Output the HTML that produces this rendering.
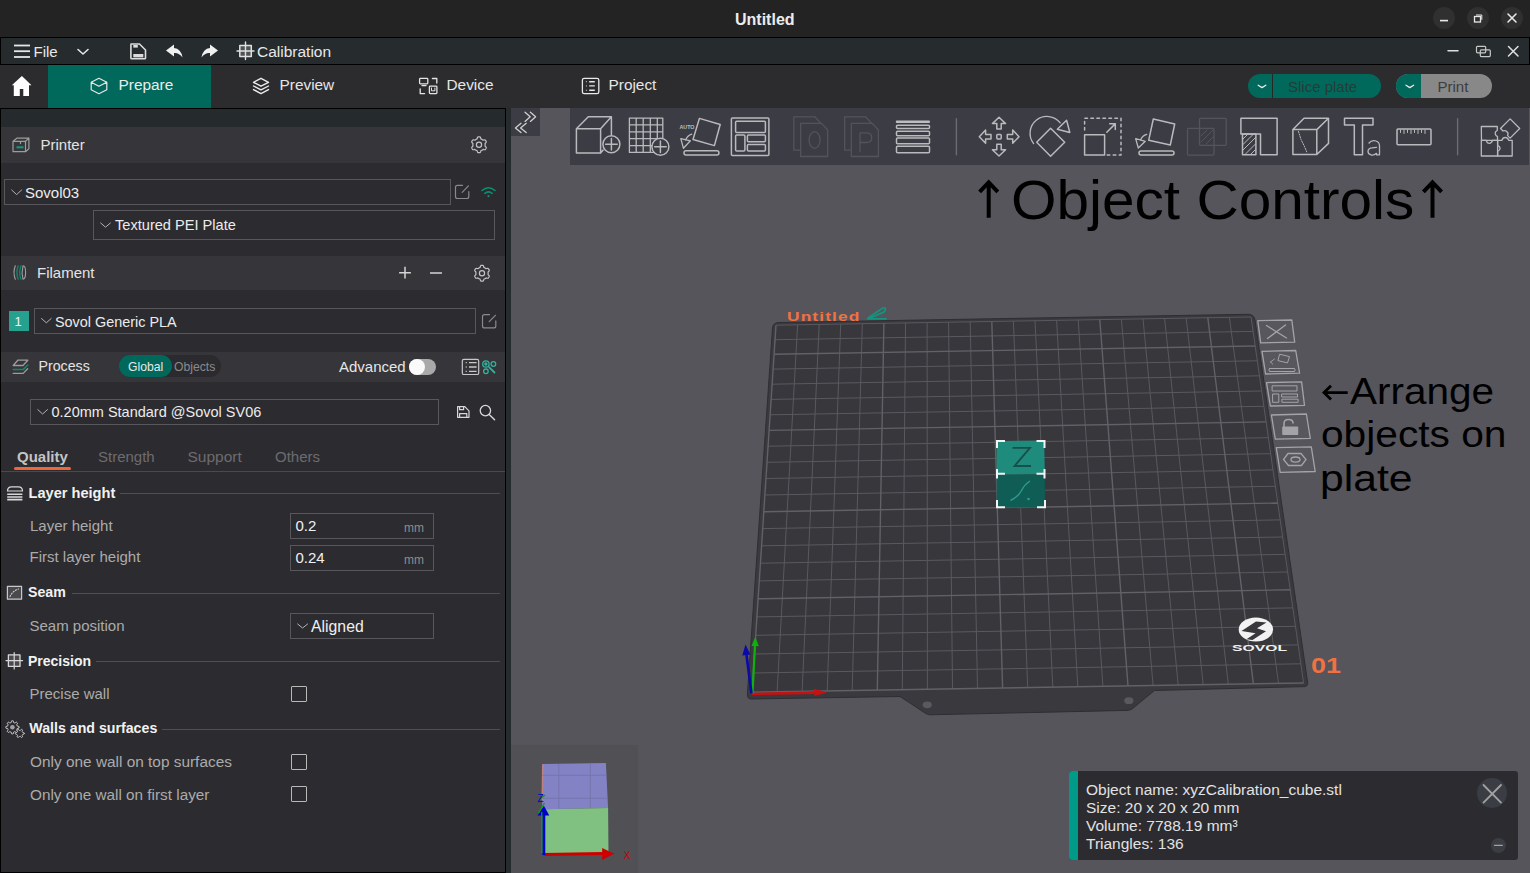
<!DOCTYPE html>
<html><head><meta charset="utf-8">
<style>
*{box-sizing:border-box;margin:0;padding:0}
html,body{width:1530px;height:873px;overflow:hidden;background:#56555b;font-family:"Liberation Sans",sans-serif}
.a{position:absolute}
.t{position:absolute;line-height:1;white-space:nowrap;font-size:15px}
svg{position:absolute;overflow:visible}
</style></head><body>
<!-- title bar -->
<div class="a" style="left:0;top:0;width:1530px;height:37px;background:#232323"></div>
<div class="t" style="left:735px;top:12px;font-size:16px;font-weight:700;color:#ececec">Untitled</div>
<div class="a" style="left:1433px;top:7px;width:22px;height:22px;border-radius:50%;background:#303030"></div>
<div class="a" style="left:1467px;top:7px;width:22px;height:22px;border-radius:50%;background:#303030"></div>
<div class="a" style="left:1501px;top:7px;width:22px;height:22px;border-radius:50%;background:#303030"></div>
<!-- menubar -->
<div class="a" style="left:0;top:37px;width:1530px;height:28px;background:#262b2e;border-top:1px solid #000;border-bottom:1px solid #000;border-left:1px solid #000;border-right:1px solid #000"></div>
<div class="t" style="left:33.5px;top:44px;color:#e8e8e8">File</div>
<div class="t" style="left:257px;top:44px;font-size:15.5px;color:#e8e8e8">Calibration</div>
<!-- tab bar -->
<div class="a" style="left:0;top:65px;width:1530px;height:43px;background:#2c2c2e"></div>
<div class="a" style="left:48px;top:65px;width:163px;height:43px;background:#00695b"></div>
<div class="t" style="left:118.5px;top:77.2px;font-size:15.4px;color:#ececec">Prepare</div>
<div class="t" style="left:279.5px;top:77.2px;font-size:15.4px;color:#e6e6e6">Preview</div>
<div class="t" style="left:446.5px;top:77.2px;font-size:15.4px;color:#e6e6e6">Device</div>
<div class="t" style="left:608.5px;top:77.2px;font-size:15.4px;color:#e6e6e6">Project</div>
<!-- slice / print -->
<div class="a" style="left:1248px;top:74px;width:133px;height:24px;border-radius:12px;background:#00695b"></div>
<div class="a" style="left:1271.5px;top:74px;width:1.5px;height:24px;background:#262828"></div>
<div class="t" style="left:1288px;top:78.5px;color:#263c3a">Slice plate</div>
<div class="a" style="left:1396px;top:74px;width:96px;height:24px;border-radius:12px;background:#888889;overflow:hidden"><div class="a" style="left:0;top:0;width:25px;height:24px;background:#00695b"></div></div>
<div class="t" style="left:1437.5px;top:78.5px;color:#3c3c40">Print</div>
<!-- left panel frame -->
<div class="a" style="left:0;top:108px;width:511px;height:765px;background:#262c2d"></div>
<div class="a" style="left:0;top:108px;width:506px;height:765px;background:#000"></div>
<div class="a" style="left:1px;top:109px;width:504px;height:763px;background:#2c2b30"></div>
<div class="a" style="left:1px;top:109px;width:504px;height:18px;background:#252b2d"></div>
<!-- Printer header -->
<div class="a" style="left:1px;top:127px;width:504px;height:36px;background:#36353a"></div>
<div class="t" style="left:40.5px;top:137px;color:#e4e4e4">Printer</div>
<div class="a" style="left:4px;top:179px;width:447px;height:26px;border:1px solid #58575c"></div>
<div class="t" style="left:25px;top:184.6px;color:#ececec">Sovol03</div>
<div class="a" style="left:93px;top:210px;width:402px;height:30px;border:1px solid #58575c"></div>
<div class="t" style="left:115px;top:218.4px;font-size:14.6px;color:#ececec">Textured PEI Plate</div>
<!-- Filament header -->
<div class="a" style="left:1px;top:256px;width:504px;height:34px;background:#36353a"></div>
<div class="t" style="left:37px;top:265.3px;color:#e4e4e4">Filament</div>
<div class="a" style="left:9px;top:311px;width:20px;height:20px;background:#26a08f"></div>
<div class="t" style="left:14.5px;top:314.5px;font-size:13px;color:#f4f4f4">1</div>
<div class="a" style="left:34px;top:308px;width:442px;height:26px;border:1px solid #58575c"></div>
<div class="t" style="left:55px;top:314.5px;font-size:14.4px;color:#ececec">Sovol Generic PLA</div>
<!-- Process header -->
<div class="a" style="left:1px;top:352px;width:504px;height:30px;background:#36353a"></div>
<div class="t" style="left:38.5px;top:359.3px;font-size:14.2px;color:#e4e4e4">Process</div>
<div class="a" style="left:119px;top:355px;width:102px;height:22px;border-radius:11px;background:#2b2a2f"></div>
<div class="a" style="left:119px;top:355px;width:53px;height:22px;border-radius:11px;background:#00695b"></div>
<div class="t" style="left:128px;top:360.5px;font-size:12.2px;color:#e8e8e8">Global</div>
<div class="t" style="left:174px;top:360.5px;font-size:12.2px;color:#8a8a8c">Objects</div>
<div class="t" style="left:339px;top:359.3px;color:#e6e6e6">Advanced</div>
<div class="a" style="left:409px;top:359px;width:27px;height:16px;border-radius:8px;background:#a9a9aa"></div>
<div class="a" style="left:409px;top:359px;width:16px;height:16px;border-radius:50%;background:#fafafa"></div>
<!-- process combo -->
<div class="a" style="left:30px;top:399px;width:409px;height:26px;border:1px solid #58575c"></div>
<div class="t" style="left:51.5px;top:404.7px;font-size:14.5px;color:#ececec">0.20mm Standard @Sovol SV06</div>
<!-- tabs -->
<div class="t" style="left:17px;top:448.5px;font-weight:700;color:#c4c4c4">Quality</div>
<div class="t" style="left:98px;top:448.5px;color:#6c6c6f">Strength</div>
<div class="t" style="left:187.5px;top:448.5px;font-size:15.5px;color:#6c6c6f">Support</div>
<div class="t" style="left:275px;top:448.5px;color:#6c6c6f">Others</div>
<div class="a" style="left:14px;top:467px;width:57px;height:3px;border-radius:1.5px;background:#f0663a"></div>
<div class="a" style="left:1px;top:471px;width:504px;height:1px;background:#4a494e"></div>
<!-- options -->
<div class="t" style="left:28.5px;top:485.5px;font-size:14.6px;font-weight:700;color:#f2f2f2">Layer height</div>
<div class="a" style="left:120px;top:493px;width:380px;height:1px;background:#4f4e53"></div>
<div class="t" style="left:30px;top:518.3px;color:#ababab">Layer height</div>
<div class="a" style="left:290px;top:513px;width:144px;height:26px;border:1px solid #58575c"></div>
<div class="t" style="left:295.5px;top:518.3px;color:#f0f0f0">0.2</div>
<div class="t" style="left:404px;top:521.8px;font-size:12px;color:#8c8c8c">mm</div>
<div class="t" style="left:29.5px;top:549.3px;color:#ababab">First layer height</div>
<div class="a" style="left:290px;top:545px;width:144px;height:26px;border:1px solid #58575c"></div>
<div class="t" style="left:295.5px;top:550.3px;color:#f0f0f0">0.24</div>
<div class="t" style="left:404px;top:553.8px;font-size:12px;color:#8c8c8c">mm</div>
<div class="t" style="left:28px;top:584.6px;font-size:14.2px;font-weight:700;color:#f2f2f2">Seam</div>
<div class="a" style="left:72px;top:593px;width:428px;height:1px;background:#4f4e53"></div>
<div class="t" style="left:29.5px;top:618px;color:#ababab">Seam position</div>
<div class="a" style="left:290px;top:613px;width:144px;height:26px;border:1px solid #58575c"></div>
<div class="t" style="left:311px;top:619px;font-size:15.8px;color:#f0f0f0">Aligned</div>
<div class="t" style="left:28px;top:654px;font-size:14px;font-weight:700;color:#f2f2f2">Precision</div>
<div class="a" style="left:96px;top:661px;width:404px;height:1px;background:#4f4e53"></div>
<div class="t" style="left:29.5px;top:686px;color:#ababab">Precise wall</div>
<div class="a" style="left:291px;top:686px;width:16px;height:16px;border:1px solid #b8b8b8;border-radius:1px"></div>
<div class="t" style="left:29.3px;top:721.3px;font-size:14.2px;font-weight:700;color:#f2f2f2">Walls and surfaces</div>
<div class="a" style="left:162px;top:729px;width:338px;height:1px;background:#4f4e53"></div>
<div class="t" style="left:30px;top:753.6px;font-size:15.4px;color:#ababab">Only one wall on top surfaces</div>
<div class="a" style="left:291px;top:754px;width:16px;height:16px;border:1px solid #b8b8b8;border-radius:1px"></div>
<div class="t" style="left:30px;top:786.6px;font-size:15.3px;color:#ababab">Only one wall on first layer</div>
<div class="a" style="left:291px;top:786px;width:16px;height:16px;border:1px solid #b8b8b8;border-radius:1px"></div>
<!-- viewport -->
<div class="a" style="left:511px;top:108px;width:1019px;height:765px;background:#56555b"></div>
<div class="a" style="left:511px;top:108px;width:29px;height:28px;background:#3b3c44"></div>
<div class="a" style="left:570px;top:108px;width:959px;height:57px;background:#3b3c44"></div>
<svg width="1530" height="873" style="left:0;top:0" viewBox="0 0 1530 873">
<path d="M779,322.5 L1248,314.3 Q1254,314.3 1255,320 L1307.7,683 Q1308,686.5 1304,686.6 L1154.5,690.5 L1132,709 Q1130,710.3 1127,710.4 L930,714.8 Q927.6,714.8 925,713 L900,696.5 L751,699 Q747.2,699 747.4,694 L772.5,328 Q773,322.5 779,322.5 Z" fill="#3a393e" stroke="#2f2e33" stroke-width="1"/>
<path d="M776,325.2 L1251,317 L1303.6,683 L752,692.2 Z" fill="#38373c"/>
<ellipse cx="927.2" cy="704.8" rx="4.6" ry="3.4" fill="#5a595f"/>
<ellipse cx="1128.9" cy="700.7" rx="4.6" ry="3.4" fill="#5a595f"/>
<g stroke="#5a5960" stroke-width="1" fill="none"><line x1="797.6" y1="324.8" x2="777.1" y2="691.8"/><line x1="753.3" y1="673.0" x2="1300.8" y2="663.8"/><line x1="819.2" y1="324.5" x2="802.1" y2="691.4"/><line x1="754.5" y1="654.0" x2="1298.1" y2="644.9"/><line x1="840.7" y1="324.1" x2="827.2" y2="690.9"/><line x1="755.7" y1="635.3" x2="1295.4" y2="626.3"/><line x1="862.3" y1="323.7" x2="852.2" y2="690.5"/><line x1="756.9" y1="616.9" x2="1292.8" y2="607.9"/><line x1="905.5" y1="323.0" x2="902.3" y2="689.7"/><line x1="759.3" y1="580.9" x2="1287.6" y2="572.0"/><line x1="927.1" y1="322.6" x2="927.4" y2="689.3"/><line x1="760.4" y1="563.2" x2="1285.1" y2="554.4"/><line x1="948.6" y1="322.2" x2="952.5" y2="688.9"/><line x1="761.6" y1="545.8" x2="1282.6" y2="537.0"/><line x1="970.2" y1="321.8" x2="977.5" y2="688.4"/><line x1="762.7" y1="528.6" x2="1280.2" y2="519.9"/><line x1="1013.4" y1="321.1" x2="1027.7" y2="687.6"/><line x1="764.9" y1="495.0" x2="1275.3" y2="486.3"/><line x1="1035.0" y1="320.7" x2="1052.8" y2="687.2"/><line x1="766.0" y1="478.5" x2="1273.0" y2="469.9"/><line x1="1056.6" y1="320.4" x2="1077.8" y2="686.8"/><line x1="767.0" y1="462.3" x2="1270.6" y2="453.7"/><line x1="1078.2" y1="320.0" x2="1102.9" y2="686.3"/><line x1="768.1" y1="446.2" x2="1268.3" y2="437.7"/><line x1="1121.4" y1="319.2" x2="1153.1" y2="685.5"/><line x1="770.1" y1="414.8" x2="1263.8" y2="406.3"/><line x1="1143.0" y1="318.9" x2="1178.2" y2="685.1"/><line x1="771.1" y1="399.4" x2="1261.6" y2="391.0"/><line x1="1164.6" y1="318.5" x2="1203.2" y2="684.7"/><line x1="772.1" y1="384.2" x2="1259.4" y2="375.8"/><line x1="1186.2" y1="318.1" x2="1228.3" y2="684.3"/><line x1="773.1" y1="369.1" x2="1257.3" y2="360.8"/><line x1="1229.4" y1="317.4" x2="1278.5" y2="683.4"/><line x1="775.1" y1="339.7" x2="1253.1" y2="331.4"/><line x1="1251.0" y1="317.0" x2="1303.6" y2="683.0"/><line x1="776.0" y1="325.2" x2="1251.0" y2="317.0"/></g><g stroke="#626168" stroke-width="1.4" fill="none"><line x1="776.0" y1="325.2" x2="752.0" y2="692.2"/><line x1="752.0" y1="692.2" x2="1303.6" y2="683.0"/><line x1="883.9" y1="323.3" x2="877.3" y2="690.1"/><line x1="758.1" y1="598.8" x2="1290.2" y2="589.8"/><line x1="991.8" y1="321.5" x2="1002.6" y2="688.0"/><line x1="763.8" y1="511.7" x2="1277.7" y2="503.0"/><line x1="1099.8" y1="319.6" x2="1128.0" y2="685.9"/><line x1="769.1" y1="430.4" x2="1266.1" y2="421.9"/><line x1="1207.8" y1="317.7" x2="1253.4" y2="683.8"/><line x1="774.1" y1="354.3" x2="1255.2" y2="346.0"/></g>
<!-- plate label -->
<text transform="translate(787,320.6) scale(1.45,1)" font-family="Liberation Sans" font-weight="700" font-size="12" fill="#f07242" letter-spacing="0.75">Untitled</text>
<path d="M867.5,318.8 h18.5 M868.5,317.8 l12.5,-8.6 q3.4,-2.2 4.3,-0.6 q0.8,1.6 -2.2,3.8 l-12.8,5.6" stroke="#14937f" stroke-width="1.8" fill="none" stroke-linecap="round"/>
<!-- sovol logo -->
<ellipse cx="1255.9" cy="629.5" rx="17.2" ry="12" fill="#f2f2f2"/>
<path d="M1241.5,631 L1256,621.5 L1266.5,622.5 L1257,628.3 L1266,631.2 L1252.5,640 L1246.5,639.3 L1255.5,633.2 Z" fill="#38373c"/>
<text x="1232" y="651.3" font-family="Liberation Sans" font-weight="700" font-size="9.6" fill="#f0f0f0" textLength="55" lengthAdjust="spacingAndGlyphs">SOVOL</text>
<text x="1311" y="672.6" font-family="Liberation Sans" font-weight="700" font-size="22" fill="#f07242" textLength="30" lengthAdjust="spacingAndGlyphs">01</text>
<!-- plate side icons -->
<g stroke="#a4a4a8" stroke-width="1.3" fill="#58575d" stroke-linejoin="round"><path d="M1257.8,320.7 L1291.8,320 L1294.7,342.1 L1260.7,342.8 Z"/><path d="M1262,351.4 L1295.7,350.5 L1299.6,373.2 L1265.6,374 Z"/><path d="M1266.5,382.6 L1301.6,381.8 L1304.5,405.3 L1270.4,406 Z"/><path d="M1271.4,415 L1306.4,414 L1310.3,438.4 L1275.3,439.2 Z"/><path d="M1276.3,447.7 L1311.3,446.8 L1315.2,471.5 L1280.2,472.4 Z"/></g>
<g stroke="#a4a4a8" stroke-width="1.3" fill="none" stroke-linecap="round" stroke-linejoin="round">
<path d="M1266.5,325.5 l20,12.5 M1285.5,325 l-18,13.5"/>
<path d="M1280,354.3 l9.5,2.3 l-2,6.3 l-9.2,-2.2 z" stroke-width="1"/>
<path d="M1269.5,368.5 h25 q1.3,1.5 0,3 h-25 q-1.3,-1.5 0,-3" stroke-width="1"/>
<path d="M1270.5,362 l4,-3 M1270.5,362 l2.3,2.2" stroke-width="0.9"/>
<path d="M1272.5,385.8 h24.5 v5.2 h-24.5 z M1273,394 h5.8 v8.3 h-5.8 z M1282,394 h15.5 v3 h-15.5 z M1282.3,399.2 h15.8 v3.1 h-15.8 z" stroke-width="1"/>
<path d="M1284,427 v-3.5 q0,-4 4.5,-4 q4.5,0 4.5,3.5" stroke-width="1.6"/>
</g>
<rect x="1282.2" y="426.5" width="16" height="8.5" rx="0.8" fill="#a4a4a8"/>
<g stroke="#a4a4a8" stroke-width="1.3" fill="none">
<path d="M1288,453.5 h13 l5,6 l-4.5,6 h-13 l-5,-6 z"/>
<ellipse cx="1295.5" cy="459.6" rx="4.5" ry="2.6"/>
</g>
<!-- object -->
<path d="M996.6,440.9 L1044.2,440.6 L1044.8,474.3 L996.6,474.5 Z" fill="#1f8b7d"/>
<path d="M996.6,474.5 L1044.8,474.3 L1045,507.4 L996.8,507.6 Z" fill="#0f5d54"/>
<path d="M1012.5,447.8 h17.5 l-15.5,18.2 h16.5" stroke="#17504a" stroke-width="1.8" fill="none"/>
<path d="M1010.5,500.5 q8,-4 11,-10 q3,-6 8.5,-9.5" stroke="#2a9b8c" stroke-width="1.4" fill="none"/>
<circle cx="1028.5" cy="499" r="1.3" fill="#2a9b8c"/>
<g stroke="#f4f4f4" stroke-width="2" fill="none" stroke-linecap="butt">
<path d="M997,448 v-7 h8 M1036.5,441 h8 v7 M997,469 v9.5 M997,473.8 h8 M1044.5,469 v9.5 M1044.5,473.8 h-8 M997,500 v7.3 h8 M1045,500 v7.3 h-8"/>
</g>
<!-- axes -->
<path d="M752,694 L816,692.6" stroke="#c81010" stroke-width="2.6"/>
<path d="M814,688.8 L827,692.4 L814.5,696 Z" fill="#c81010"/>
<path d="M752.5,693.5 L755,645" stroke="#10b010" stroke-width="2.2"/>
<path d="M751.5,646 L755.3,636.8 L758.8,646.2 Z" fill="#10b010"/>
<path d="M751.5,693.5 L746.5,655" stroke="#0a0aa8" stroke-width="2.6"/>
<path d="M742.3,655.5 L745.5,644.5 L750.4,654.5 Z" fill="#0a0aa8"/>
</svg>
<!-- annotations -->
<div class="t" style="left:1010.5px;top:172.5px;font-size:55px;color:#000;transform:scaleX(1.064);transform-origin:0 0">Object Controls</div>
<svg width="1530" height="873" style="left:0;top:0" viewBox="0 0 1530 873" fill="none" stroke="#000" stroke-width="4" stroke-linecap="butt">
<path d="M988.7,181.5 V217.7 M979.6,191.8 L988.7,182.3 L997.8,191.8"/>
<path d="M1432.5,181.5 V217.7 M1423.4,191.8 L1432.5,182.3 L1441.6,191.8"/>
<path d="M1323.5,392.6 H1347.7 M1331,385.8 L1324,392.6 L1331,399.4" stroke-width="2.8"/>
</svg>
<div class="t" style="left:1350px;top:373.5px;font-size:36px;color:#000;transform:scaleX(1.124);transform-origin:0 0">Arrange</div>
<div class="t" style="left:1320.5px;top:417px;font-size:36px;color:#000;transform:scaleX(1.13);transform-origin:0 0">objects on</div>
<div class="t" style="left:1320px;top:460.5px;font-size:36px;color:#000;transform:scaleX(1.186);transform-origin:0 0">plate</div>
<!-- minimap -->
<div class="a" style="left:511px;top:745px;width:127px;height:128px;background:#505055"></div>
<svg width="1530" height="873" style="left:0;top:0" viewBox="0 0 1530 873">
<path d="M542.2,764 L605.9,763 L608.1,808 L542.2,809.3 Z" fill="#8282c4"/>
<path d="M542.2,809.3 L608.1,808 L608.5,853.6 L542.5,853.8 Z" fill="#80c080"/>
<path d="M542,764.5 L541.5,800 L543,800 L543.5,764.5 Z" fill="#c08080"/>
<g stroke="#7373a8" stroke-width="0.8" fill="none">
<path d="M558.8,764 V808.6 M590.4,763.5 V808.2 M542.2,775.3 H606.4 M542.2,798.3 H607.6"/>
</g>
<path d="M543.6,854.5 L603,853.5" stroke="#cc0000" stroke-width="3.2"/>
<path d="M602.2,848 L614.1,853.8 L602.2,860 Z" fill="#cc0000"/>
<path d="M543.8,855 V814" stroke="#0000cc" stroke-width="3"/>
<path d="M537.5,815.6 L543.9,805.8 L549.3,815.6 Z" fill="#0000cc"/>
<path d="M541.8,853 V812" stroke="#00aa00" stroke-width="1.2"/>
<path d="M538.5,813 L544.5,803 M539,800 L545,795" stroke="#00aa00" stroke-width="1.3"/>
<text x="537.6" y="801.6" font-family="Liberation Sans" font-size="10" fill="#0000cc">Z</text>
<text x="623.5" y="859.3" font-family="Liberation Sans" font-size="10.5" fill="#cc0000">X</text>
</svg>
<!-- info box -->
<div class="a" style="left:1069px;top:771px;width:449px;height:89px;border-radius:3px;background:#2c2b30;overflow:hidden"><div class="a" style="left:0;top:0;width:9px;height:89px;background:#009a88"></div></div>
<div class="t" style="left:1086px;top:781.3px;font-size:15.5px;line-height:17.8px;color:#e2e2e2;white-space:pre">Object name: xyzCalibration_cube.stl
Size: 20 x 20 x 20 mm
Volume: 7788.19 mm³
Triangles: 136</div>
<div class="a" style="left:1477px;top:778px;width:30px;height:30px;border-radius:50%;background:#3a3d44"></div>
<div class="a" style="left:1491px;top:838px;width:15px;height:15px;border-radius:50%;background:#3a3d44"></div>
<svg width="1530" height="873" style="left:0;top:0" viewBox="0 0 1530 873" fill="none" stroke="#a2a2a4" stroke-width="1.8" stroke-linecap="round">
<path d="M1483.5,785 L1501,802.6 M1501,785 L1483.5,802.6"/>
<path d="M1494.5,845.4 H1502.3" stroke-width="1.2"/>
</svg>
<svg width="1530" height="873" style="left:0;top:0" viewBox="0 0 1530 873" fill="none" stroke-linecap="round" stroke-linejoin="round">
<!-- window buttons -->
<g stroke="#e8e8e8" stroke-width="1.6">
<line x1="1440" y1="20.6" x2="1448" y2="20.6" stroke-linecap="butt"/>
<rect x="1474.5" y="16.5" width="6" height="5.5" stroke-width="1.3" stroke-linejoin="miter"/>
<path d="M1476,15 h5.8 v4.8" stroke-width="1" stroke-linecap="butt" stroke-linejoin="miter"/>
<path d="M1508,14 l8,8 M1516,14 l-8,8"/>
</g>
<!-- menubar -->
<g stroke="#e6e6e6" stroke-width="1.8" stroke-linecap="butt">
<line x1="14" y1="45.5" x2="30" y2="45.5"/><line x1="14" y1="51.2" x2="30" y2="51.2"/><line x1="14" y1="57" x2="30" y2="57"/>
</g>
<polyline points="78,49.5 83,54 88,49.5" stroke="#e6e6e6" stroke-width="1.6"/>
<g stroke="#dcdcdc" stroke-width="1.6">
<path d="M131,44 h8.5 l6,6 v8 q0,0.8 -0.8,0.8 h-13 q-0.8,0 -0.8,-0.8 v-13.2 q0,-0.8 0.8,-0.8z"/>
</g>
<rect x="133.3" y="45" width="4.5" height="2.6" fill="#dcdcdc"/>
<rect x="133.3" y="54" width="10" height="3.4" fill="#dcdcdc"/>
<path d="M166,50.6 L174,44.6 L174,48 Q181,48.5 182.5,57.5 Q179,52.5 174,53 L174,56.6 Z" fill="#f0f0f0"/>
<path d="M218,50.6 L210,44.6 L210,48 Q203,48.5 201.5,57.5 Q205,52.5 210,53 L210,56.6 Z" fill="#f0f0f0"/>
<rect x="239.8" y="45.6" width="11.5" height="11" fill="#505354" stroke="#e0e0e0" stroke-width="1.5"/>
<path d="M245.5,42 v17.6 M237,51 h17" stroke="#e0e0e0" stroke-width="1.4"/>
<!-- menubar right -->
<g stroke="#e0e0e0" stroke-width="1.5">
<line x1="1448" y1="50.7" x2="1458" y2="50.7"/>
<rect x="1476.5" y="46.3" width="9.2" height="6.5" rx="1" stroke="#c8c8c8" stroke-width="1.2"/>
<rect x="1480.3" y="49.8" width="10" height="6.8" rx="1" stroke="#c8c8c8" stroke-width="1.2"/>
<path d="M1508.5,46.5 l9.5,9.5 M1518,46.5 l-9.5,9.5"/>
</g>
<!-- tab icons -->
<path d="M21.9,76 L31.5,85.3 L29,85.3 L29,96 L23.3,96 L23.3,89 L19.8,89 L19.8,96 L13.8,96 L13.8,85.3 L11.8,85.3 Z" fill="#ffffff"/>
<g stroke="#e8e8e8" stroke-width="1.2">
<path d="M98.9,78.3 L106.8,82.2 L106.8,89.8 L98.9,93.7 L91.2,89.8 L91.2,82.2 Z M91.2,82.2 L98.9,86.3 L106.8,82.2"/>
</g>
<g stroke="#ececec" stroke-width="1.4">
<path d="M261,78.3 L268.5,82.3 L261,86.2 L253.5,82.3 Z"/>
<path d="M253.5,86 L261,89.9 L268.5,86"/>
<path d="M253.5,89.6 L261,93.6 L268.5,89.6"/>
</g>
<g stroke="#e4e4e4" stroke-width="1.3">
<rect x="419.6" y="78.4" width="8.2" height="5.4" rx="0.8"/>
<path d="M422,85.6 h4"/>
<path d="M432.4,78.5 h4.4 v4.5"/>
<path d="M420.2,88.8 v4.8 h4.4"/>
<rect x="429.4" y="86.2" width="7.5" height="7.4" rx="0.8"/>
<path d="M431.5,88 v2.8 h3.4 v-2.8" stroke-width="1"/>
</g>
<g stroke="#e8e8e8">
<rect x="582.4" y="78.3" width="16.4" height="15.4" rx="1.8" stroke-width="1.3"/>
<path d="M589.2,81.7 h5.6 M589.2,85.9 h5.6 M589.2,90.2 h5.6" stroke-width="1.4" stroke-linecap="butt"/>
<path d="M586.4,81.7 v0.1 M586.4,85.9 v0.1 M586.4,90.2 v0.1" stroke-width="1"/>
</g>
<!-- slice/print chevrons -->
<polyline points="1258.2,85.2 1262,87.6 1265.8,85.2" stroke="#e8e8e8" stroke-width="1.3"/>
<polyline points="1406,85.2 1409.8,87.6 1413.6,85.2" stroke="#e8e8e8" stroke-width="1.3"/>
<!-- panel icons -->
<g stroke="#9c9c9c" stroke-width="1.2">
<path d="M13,141.3 h12.5 v10.4 h-12.5 z M13,141.3 l4.2,-3.2 h11.7 v10.6 l-3.4,3 M25.5,141.3 l3.4,-3.2 M20.5,141.6 v2"/>
</g>
<path d="M16.5,147.3 h7" stroke="#139a80" stroke-width="2" stroke-linecap="butt"/>
<g stroke="#a0a0a0" stroke-width="1.1">
<path d="M15.3,265.8 q-2.6,6.7 0,13.4 M23,265.8 q2.6,0 2.6,6.7 q0,6.7 -2.6,6.7 q-1.8,-6.7 0,-13.4"/>
</g>
<g stroke="#0d8a6e" stroke-width="1.3">
<path d="M18.2,265.8 q-2.6,6.7 0,13.4 M21,265.8 q-2.6,6.7 0,13.4"/>
</g>
<g stroke="#9c9c9c" stroke-width="1.3">
<path d="M13.2,365.5 l4.6,-5.3 h10 l-4.8,5.3 z"/>
<path d="M13.2,373.4 h10 l4.4,-4.6"/>
</g>
<path d="M13.2,369.4 h10.2 l4.4,-4.4" stroke="#0d8a6e" stroke-width="1.5"/>
<!-- gear icons -->
<g id="gear" stroke="#c4c4c4" stroke-width="1.2"><path d="M485.14,144.80 L485.13,145.20 L485.09,145.60 L485.02,146.00 L485.57,146.56 L486.08,147.20 L486.30,147.82 L486.09,148.29 L485.84,148.75 L485.57,149.19 L485.27,149.61 L484.62,149.73 L483.81,149.61 L483.05,149.42 L482.74,149.67 L482.41,149.91 L482.07,150.12 L481.72,150.31 L481.35,150.47 L480.97,150.61 L480.76,151.37 L480.46,152.13 L480.03,152.63 L479.52,152.68 L479.00,152.70 L478.48,152.68 L477.97,152.63 L477.54,152.13 L477.24,151.37 L477.03,150.61 L476.65,150.47 L476.28,150.31 L475.93,150.12 L475.59,149.91 L475.26,149.67 L474.95,149.42 L474.19,149.61 L473.38,149.73 L472.73,149.61 L472.43,149.19 L472.16,148.75 L471.91,148.29 L471.70,147.82 L471.92,147.20 L472.43,146.56 L472.98,146.00 L472.91,145.60 L472.87,145.20 L472.86,144.80 L472.87,144.40 L472.91,144.00 L472.98,143.60 L472.43,143.04 L471.92,142.40 L471.70,141.78 L471.91,141.31 L472.16,140.85 L472.43,140.41 L472.73,139.99 L473.38,139.87 L474.19,139.99 L474.95,140.18 L475.26,139.93 L475.59,139.69 L475.93,139.48 L476.28,139.29 L476.65,139.13 L477.03,138.99 L477.24,138.23 L477.54,137.47 L477.97,136.97 L478.48,136.92 L479.00,136.90 L479.52,136.92 L480.03,136.97 L480.46,137.47 L480.76,138.23 L480.97,138.99 L481.35,139.13 L481.72,139.29 L482.07,139.48 L482.41,139.69 L482.74,139.93 L483.05,140.18 L483.81,139.99 L484.62,139.87 L485.27,139.99 L485.57,140.41 L485.84,140.85 L486.09,141.31 L486.30,141.78 L486.08,142.40 L485.57,143.04 L485.02,143.60 L485.09,144.00 L485.13,144.40 Z"/><circle cx="479" cy="144.8" r="2.6"/></g>
<use href="#gear" x="3" y="128.5"/>
<!-- edit icons -->
<g stroke="#8a8a8c" stroke-width="1.2">
<path d="M462.5,185.3 h-5 q-2,0 -2,2 v9.2 q0,2 2,2 h9.3 q2,0 2,-2 v-5"/>
<path d="M462.2,192.3 l6.2,-6.4"/>
<path d="M489.5,314.7 h-5 q-2,0 -2,2 v9.2 q0,2 2,2 h9.3 q2,0 2,-2 v-5"/>
<path d="M489.2,321.7 l6.2,-6.4"/>
</g>
<!-- wifi -->
<g stroke="#0a8f72" stroke-width="1.6">
<path d="M482,190.5 q6.5,-5.5 13,0"/>
<path d="M484.8,193.3 q3.7,-3 7.4,0"/>
</g>
<circle cx="488.5" cy="196.2" r="1.1" fill="#0a8f72"/>
<!-- plus minus -->
<path d="M405,266.8 v11.8 M399.1,272.7 h11.8 M430,273 h12" stroke="#d4d4d4" stroke-width="1.5" stroke-linecap="butt"/>
<!-- list & link -->
<g stroke="#c8c8c8">
<rect x="462.3" y="359.3" width="16.4" height="15.2" rx="1.6" stroke-width="1.2"/>
<path d="M469,362.7 h7.6 M469,367 h7.6 M469,371.3 h7.6" stroke-width="1.3" stroke-linecap="butt"/>
<path d="M466,362.7 h0.6 M466,367 h0.6 M466,371.3 h0.6" stroke-width="1"/>
</g>
<g stroke="#30b39c" stroke-width="1.3">
<circle cx="485.9" cy="364" r="3.2"/>
<circle cx="485.9" cy="364" r="1" fill="#30b39c"/>
<circle cx="493.4" cy="364" r="2.3"/>
<circle cx="485.9" cy="371.3" r="2.3"/>
<path d="M489.3,367.3 l5.2,5.2" stroke-width="1.8"/>
</g>
<!-- save / search -->
<g stroke="#d8d8d8" stroke-width="1.2">
<path d="M457.6,406.7 h7.2 l4.2,4.2 v6.4 h-11.4 z"/>
<path d="M459.6,406.9 v2.8 h4 v-2.8 M459.6,417.2 v-3.5 h7.2 v3.5"/>
<circle cx="485.4" cy="410.6" r="5.2" stroke-width="1.3"/>
<path d="M489.2,414.4 l5.4,5.4" stroke-width="1.4"/>
</g>
<!-- combo chevrons -->
<g stroke="#b4b4b4" stroke-width="1">
<polyline points="11.7,190 16.6,194.6 21.6,190"/>
<polyline points="100.7,223 105.5,227.2 110.4,223"/>
<polyline points="41.5,318.5 46.3,322.8 51.2,318.5"/>
<polyline points="37.8,409.6 42.6,414 47.5,409.6"/>
<polyline points="297.6,624 302.6,628 307.6,624"/>
</g>
<!-- section icons -->
<g stroke="#d8d8d8" stroke-width="1.2">
<path d="M7.5,491 q0,-4.2 4,-4.2 h7 q4,0 4,4.2 z"/>
<path d="M7.2,494.2 h15.2 M7.2,497 h15.2 M7.2,499.6 h15.2" stroke-width="1.6" stroke-linecap="butt"/>
<rect x="7.4" y="586.4" width="14.2" height="12.8" fill="#4a4a4e" stroke="#c8c8c8"/>
<path d="M10,596.5 q2,-5 8.5,-7.5" stroke="#c8c8c8" stroke-width="1.1" stroke-dasharray="1.2 1.6"/>
<rect x="8.4" y="654.8" width="11.6" height="11.6" fill="#4a4a4e" stroke="#d8d8d8" stroke-width="1.3"/>
<path d="M14.2,652.5 v16.4 M6,660.6 h16.6" stroke-width="1.2"/>
</g>
<g stroke="#d0d0d0" stroke-width="1">
<path d="M19.00,727.30 L18.99,727.73 L18.84,728.15 L17.89,728.39 L17.13,728.57 L17.04,728.88 L16.93,729.18 L16.79,729.47 L16.64,729.75 L17.06,730.41 L17.56,731.26 L17.36,731.65 L17.07,731.97 L16.75,732.26 L16.36,732.46 L15.51,731.96 L14.85,731.54 L14.57,731.69 L14.28,731.83 L13.98,731.94 L13.67,732.03 L13.49,732.79 L13.25,733.74 L12.83,733.89 L12.40,733.90 L11.97,733.89 L11.55,733.74 L11.31,732.79 L11.13,732.03 L10.82,731.94 L10.52,731.83 L10.23,731.69 L9.95,731.54 L9.29,731.96 L8.44,732.46 L8.05,732.26 L7.73,731.97 L7.44,731.65 L7.24,731.26 L7.74,730.41 L8.16,729.75 L8.01,729.47 L7.87,729.18 L7.76,728.88 L7.67,728.57 L6.91,728.39 L5.96,728.15 L5.81,727.73 L5.80,727.30 L5.81,726.87 L5.96,726.45 L6.91,726.21 L7.67,726.03 L7.76,725.72 L7.87,725.42 L8.01,725.13 L8.16,724.85 L7.74,724.19 L7.24,723.34 L7.44,722.95 L7.73,722.63 L8.05,722.34 L8.44,722.14 L9.29,722.64 L9.95,723.06 L10.23,722.91 L10.52,722.77 L10.82,722.66 L11.13,722.57 L11.31,721.81 L11.55,720.86 L11.97,720.71 L12.40,720.70 L12.83,720.71 L13.25,720.86 L13.49,721.81 L13.67,722.57 L13.98,722.66 L14.28,722.77 L14.57,722.91 L14.85,723.06 L15.51,722.64 L16.36,722.14 L16.75,722.34 L17.07,722.63 L17.36,722.95 L17.56,723.34 L17.06,724.19 L16.64,724.85 L16.79,725.13 L16.93,725.42 L17.04,725.72 L17.13,726.03 L17.89,726.21 L18.84,726.45 L18.99,726.87 Z"/>
<path d="M24.20,733.40 L24.19,733.69 L24.16,733.97 L23.87,734.21 L23.28,734.33 L22.69,734.38 L22.61,734.56 L22.53,734.74 L22.43,734.92 L22.33,735.09 L22.21,735.25 L22.09,735.41 L22.35,735.95 L22.54,736.52 L22.48,736.89 L22.24,737.06 L22.00,737.21 L21.75,737.35 L21.48,737.47 L21.13,737.33 L20.73,736.88 L20.39,736.39 L20.20,736.41 L20.00,736.43 L19.80,736.44 L19.60,736.43 L19.40,736.41 L19.21,736.39 L18.87,736.88 L18.47,737.33 L18.12,737.47 L17.85,737.35 L17.60,737.21 L17.36,737.06 L17.12,736.89 L17.06,736.52 L17.25,735.95 L17.51,735.41 L17.39,735.25 L17.27,735.09 L17.17,734.92 L17.07,734.74 L16.99,734.56 L16.91,734.38 L16.32,734.33 L15.73,734.21 L15.44,733.97 L15.41,733.69 L15.40,733.40 L15.41,733.11 L15.44,732.83 L15.73,732.59 L16.32,732.47 L16.91,732.42 L16.99,732.24 L17.07,732.06 L17.17,731.88 L17.27,731.71 L17.39,731.55 L17.51,731.39 L17.25,730.85 L17.06,730.28 L17.12,729.91 L17.36,729.74 L17.60,729.59 L17.85,729.45 L18.12,729.33 L18.47,729.47 L18.87,729.92 L19.21,730.41 L19.40,730.39 L19.60,730.37 L19.80,730.36 L20.00,730.37 L20.20,730.39 L20.39,730.41 L20.73,729.92 L21.13,729.47 L21.48,729.33 L21.75,729.45 L22.00,729.59 L22.24,729.74 L22.48,729.91 L22.54,730.28 L22.35,730.85 L22.09,731.39 L22.21,731.55 L22.33,731.71 L22.43,731.88 L22.53,732.06 L22.61,732.24 L22.69,732.42 L23.28,732.47 L23.87,732.59 L24.16,732.83 L24.19,733.11 Z" fill="#2c2b30"/>
</g>
<circle cx="12.4" cy="727.3" r="2.3" fill="#a0a0a0"/>
<!-- collapse -->
<g stroke="#d0d0d0" stroke-width="1.3">
<path d="M525,112.2 l5.2,4.6 -5.2,4.6 M530.4,112.2 l5.2,4.6 -5.2,4.6"/>
<path d="M521,123.3 l-5.6,4.6 5.6,4.6 M526.2,123.3 l-5.6,4.6 5.6,4.6"/>
</g>
</svg>
<svg width="1530" height="873" style="left:0;top:0" viewBox="0 0 1530 873" fill="none" stroke-linecap="round" stroke-linejoin="round">
<g stroke="#b9babd" stroke-width="1.5">
<!-- cube+ -->
<path d="M576.4,128.7 h24.2 v24.4 h-24.2 z M576.4,128.7 l11.9,-11.9 h23.1 v18.3 M600.6,128.7 l10.8,-11.9 M600.6,153.1 l2.5,-3"/>
<circle cx="611.4" cy="144.3" r="8.5" fill="#3b3c44"/>
<path d="M611.4,138.5 v11.6 M605.6,144.3 h11.6"/>
<!-- grid+ -->
<path d="M629.4,118.1 h33.4 v34.3 h-33.4 z M636.2,118.1 v34.3 M643.2,118.1 v34.3 M650.3,118.1 v34.3 M657.3,118.1 v34.3 M629.4,124.9 h33.4 M629.4,131.8 h33.4 M629.4,138.7 h33.4 M629.4,145.6 h33.4" stroke-width="1.3"/>
<circle cx="660.4" cy="146.7" r="8.5" fill="#3b3c44"/>
<path d="M660.4,140.9 v11.6 M654.6,146.7 h11.6"/>
<!-- auto orient -->
<path d="M699.4,118.4 L720.2,124.5 L714.4,145.6 L693,139.5 Z"/>
<path d="M691.7,134.1 Q687.5,135.5 685.6,139.8" stroke-width="1.3"/>
<path d="M680.8,138.6 L690.4,140.8 L683.4,148.2 Z" stroke-width="1.3"/>
<rect x="684" y="150.8" width="34.9" height="4.1" rx="2"/>
<!-- arrange -->
<rect x="731.4" y="118.1" width="37.5" height="37.5" rx="1"/>
<rect x="735.6" y="121.3" width="29.8" height="11.2" rx="1"/>
<rect x="735.6" y="135.1" width="9.3" height="16" rx="1"/>
<rect x="747.4" y="135.1" width="18" height="6.7" rx="1"/>
<rect x="747.4" y="144.4" width="18" height="6.7" rx="1"/>
</g>
<text x="679.5" y="129.4" font-family="Liberation Sans" font-weight="700" font-size="6.2" fill="#bdbdbd" textLength="15" lengthAdjust="spacingAndGlyphs">AUTO</text>
<!-- dim copy icons -->
<g stroke="#53545b" stroke-width="1.3">
<path d="M800.6,150.2 h-6.8 v-33.4 h21 l6.1,6.6"/>
<path d="M800.6,123.4 h21 l6.1,6.6 v26.5 h-27.1 z"/>
<ellipse cx="814.6" cy="140" rx="5.5" ry="8.4"/>
<path d="M851.3,150.2 h-6.7 v-33.4 h21 l6.1,6.6"/>
<path d="M851.3,123.4 h21 l6.1,6.6 v26.5 h-27.1 z"/>
<path d="M860,151.7 v-18.9 h6.5 q5.2,0 5.2,4.9 q0,4.8 -5.2,4.8 h-6.5"/>
</g>
<!-- layers -->
<rect x="895.8" y="120.6" width="34.2" height="2.4" rx="1" fill="#bcbdc0"/>
<g stroke="#b9babd" stroke-width="1.5">
<rect x="896.5" y="125.2" width="33" height="3.4" rx="1"/>
<rect x="896.5" y="131.3" width="33" height="4.4" rx="1"/>
<rect x="896.5" y="138.1" width="33" height="5.6" rx="1"/>
<rect x="896.5" y="146.3" width="33" height="6.5" rx="1"/>
</g>
<path d="M956.4,118.7 v36" stroke="#6c6d72" stroke-width="1.4"/>
<path d="M1457.6,118.7 v36" stroke="#6c6d72" stroke-width="1.4"/>
<g stroke="#b9babd" stroke-width="1.5">
<!-- move -->
<path d="M999,117.3 l6.6,6.3 h-4.4 v5.4 h-4.4 v-5.4 h-4.4 z"/>
<path d="M999,156 l6.6,-6.3 h-4.4 v-5.4 h-4.4 v5.4 h-4.4 z"/>
<path d="M979.3,136.7 l6.3,-6.6 v4.4 h5.4 v4.4 h-5.4 v4.4 z"/>
<path d="M1019,136.7 l-6.3,-6.6 v4.4 h-5.4 v4.4 h5.4 v4.4 z"/>
<rect x="996.8" y="134.5" width="4.4" height="4.4" rx="0.8"/>
<!-- rotate -->
<path d="M1033.6,143.6 A15.2,15.2 0 0 1 1060.2,122.9" stroke-width="1.3"/>
<path d="M1057.3,129.3 L1066.6,120.3 L1069.8,132.5 Z"/>
<path d="M1050.6,128.3 L1064.7,142.3 L1050.6,156.2 L1036.7,142.3 Z"/>
<!-- scale -->
<rect x="1084.6" y="134.7" width="20" height="20.3"/>
<path d="M1084.6,130 v-11.7 h36.4 v36.7 h-14" stroke-dasharray="2.6 3.4"/>
<path d="M1106.8,132.2 l8.4,-8.3 M1109.7,123.8 h5.6 v5.6"/>
<!-- lay on face -->
<path d="M1153.3,119 L1174.7,124 L1170.3,145 L1148.7,140.3 Z"/>
<path d="M1146.7,134.3 Q1142.5,135.5 1140.6,139.8" stroke-width="1.3"/>
<path d="M1135.7,138.7 L1145.3,141.3 L1138.3,148 Z" stroke-width="1.3"/>
<rect x="1139" y="151" width="35" height="4" rx="2"/>
</g>
<!-- boolean dim -->
<g stroke="#54555c" stroke-width="1.3">
<rect x="1187.5" y="128.4" width="26.5" height="26.7" rx="1"/>
<rect x="1199.5" y="118.3" width="26.7" height="27" rx="1"/>
<path d="M1201,136 l6,-6 M1201,142 l12,-12 M1206,144 l7.5,-7.5" stroke-width="1"/>
</g>
<g stroke="#b9babd" stroke-width="1.5">
<!-- support -->
<path d="M1240.9,118.2 h36.2 v36.6 h-16.6 v-20.9 h-19.6 z"/>
<rect x="1242.5" y="133.9" width="13.4" height="20.9"/>
<path d="M1243,139 l5,-5 M1243,144.5 l10.5,-10.5 M1243,150 l12.5,-12.5 M1245.5,154 l10,-10 M1251,154 l4.5,-4.5" stroke-width="1"/>
<!-- seam cube -->
<path d="M1292.9,129.6 h23.9 v24.9 h-23.9 z M1292.9,129.6 l11.1,-11.4 h24.5 v25.2 l-11.7,11.1 M1316.8,129.6 l11.7,-11.4"/>
<path d="M1298.5,131.5 l2.5,8 l3,6 l3,7" stroke-width="1" stroke-dasharray="1.2 1.4"/>
<!-- Ta -->
<path d="M1344.5,118.2 h28.5 v6.9 h-10.5 v29.7 h-8.2 v-29.7 h-9.8 z"/>
<path d="M1369,143 q3,-3.5 7,-2 q3.5,1.2 3.5,5 v8.8 h-3 v-1.5 q-2.5,2.3 -5.5,1.6 q-3.2,-0.8 -3,-3.8 q0.3,-3 4,-3.3 l4.5,-0.5" stroke-width="1.3"/>
<!-- ruler -->
<rect x="1397" y="129" width="34" height="15.8" rx="1"/>
<path d="M1400.5,130 v2.5 M1404,130 v3.5 M1407.5,130 v2.5 M1411,130 v3.5 M1414.5,130 v2.5 M1418,130 v3.5 M1421.5,130 v2.5 M1425,130 v3.5" stroke-width="1"/>
<!-- puzzle -->
<path d="M1481.3,126.5 h16 v4 q-2.5,1 -2,3.5 q0.6,2.3 2.2,2.5 v3.8 h-16 z" stroke-width="1.3"/>
<path d="M1481.3,140.3 v15.7 h16.3 v-15.7 h-5 q-1,3 -3.3,3 q-2.3,0 -3,-3 z" stroke-width="1.3"/>
<path d="M1497.6,140.3 v5 q2.5,1 2.5,3 q0,2 -2.5,3 v4.7 h14.6 v-15.7 h-3.5 q-1,-2.8 -3.5,-2.8 q-2.5,0 -3.2,2.8 z" stroke-width="1.3"/>
<path d="M1500.5,128.5 l9.6,-9.6 l9.6,9.6 l-9.6,9.6 l-2.5,-2.5 q1.2,-2.6 -0.8,-4 q-1.8,-1.5 -3.8,-0.6 z" stroke-width="1.3"/>
</g>
</svg>
</body></html>
